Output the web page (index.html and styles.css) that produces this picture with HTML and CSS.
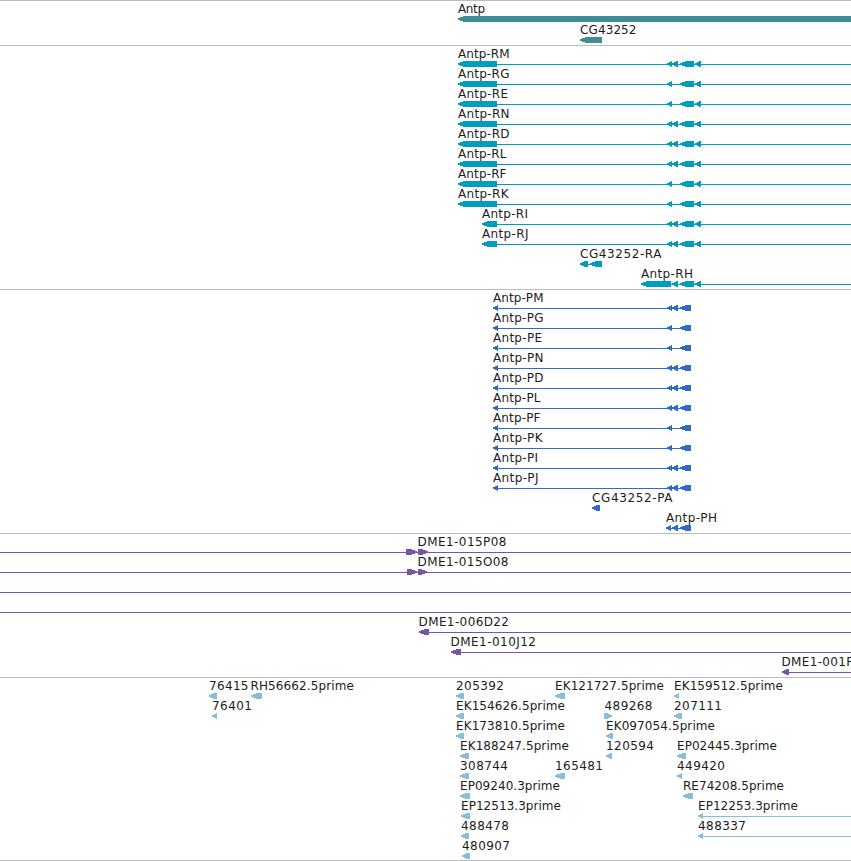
FILE: index.html
```
<!DOCTYPE html>
<html lang="en">
<head>
<meta charset="utf-8">
<title>Antp region</title>
<link rel="stylesheet" href="styles.css">
</head>
<body>
<main class="browser" id="browser"></main>
<script src="tracks.js"></script>
</body>
</html>
```
FILE: styles.css
```
body {
  margin: 0;
  background: #fff;
  overflow: hidden;
}

.browser {
  display: flex;
  flex-direction: column;
  width: 851px;
  height: 861px;
  overflow: hidden;
}

.track {
  flex: none;
  padding: 1px 0 2px;
  border-top: 1px solid #bebebe;
}

.track:last-child {
  padding-bottom: 1px;
  border-bottom: 1px solid #bebebe;
}

.row {
  display: block;
  width: 851px;
  height: 20px;
  overflow: visible;
}

.genes .row { height: 21px; }
.genes { padding-bottom: 1px; color: #408e93; }
.transcripts { color: #009dbe; }
.proteins { color: #306bcc; }
.clones { color: #7557a8; }
.insertions { color: #89bddd; }

.shape {
  fill: currentColor;
  shape-rendering: crispEdges;
}

.label {
  fill: #1c1c1c;
  font: 12px "DejaVu Sans", sans-serif;
}
```
FILE: tracks.js
```
// Feature: [start, end, direction]; line: [start, end]; label: [text, start, end]
const END = 851;

function row(labels, features, line) {
  return { labels, features, line };
}

function transcript(letter, start, second) {
  const f = [[start, 497], [667, 672], [680, 694], [695, 701]];
  if (second) f.push([672, 678]);
  const ends = { M: 509.5, G: 509.5, E: 508, N: 509.5, D: 509.5, L: 506.5, F: 506.5, K: 508.5, I: 528, J: 528.5 };
  return row([["Antp-R" + letter, start, ends[letter]]], f, [start + 3, END]);
}

function protein(letter, second) {
  const f = [[493, 498], [667, 672], [680, 691]];
  if (second) f.push([672, 678]);
  const ends = { M: 543.5, G: 543.5, E: 542, N: 543.5, D: 543.5, L: 540.5, F: 540.5, K: 542.5, I: 538, J: 538.5 };
  return row([["Antp-P" + letter, 493, ends[letter]]], f, [496, 691]);
}

const variants = [["M", 1], ["G", 0], ["E", 0], ["N", 1], ["D", 1], ["L", 1], ["F", 0], ["K", 0], ["I", 1], ["J", 1]];

const tracks = [
  ["genes", [
    row([["Antp", 458, 485]], [[458, END]]),
    row([["CG43252", 580, 636.5]], [[580, 602]])
  ]],
  ["transcripts", [
    ...variants.map(([l, s]) => transcript(l, l === "I" || l === "J" ? 482 : 458, s)),
    row([["CG43252-RA", 580, 661.5]], [[580, 588], [590, 602]], [583, 600]),
    row([["Antp-RH", 641, 693]], [[641, 671], [672, 678], [680, 694], [695, 701]], [650, END])
  ]],
  ["proteins", [
    ...variants.map(([l, s]) => protein(l, s)),
    row([["CG43252-PA", 592, 672.5]], [[592, 600]]),
    row([["Antp-PH", 666, 717]], [[666, 671], [672, 678], [680, 691]], [668, 690])
  ]],
  ["clones", [
    row([["DME1-015P08", 417.5, 506.5]], [[406, 417, 1], [418, 428, 1]], [0, END]),
    row([["DME1-015O08", 417.5, 508.5]], [[407, 417, 1], [418, 427, 1]], [0, END]),
    row([], [], [0, END]),
    row([], [], [0, END]),
    row([["DME1-006D22", 418.5, 509]], [[419, 429]], [422, END]),
    row([["DME1-010J12", 450.5, 536]], [[451, 461]], [454, END]),
    row([["DME1-001P", 781.5, 853.5]], [[782, 789]], [785, END])
  ]],
  ["insertions", [
    row([["76415", 209, 248.5], ["RH56662.5prime", 250.5, 354], ["205392", 456, 504], ["EK121727.5prime", 555, 664], ["EK159512.5prime", 674, 783]],
      [[209, 217], [251, 262], [456, 464], [555, 565], [674, 679]]),
    row([["76401", 212, 252], ["EK154626.5prime", 456, 565], ["489268", 604.5, 652.5], ["207111", 674, 722]],
      [[212, 217], [456, 464], [604, 612, 1], [674, 682]]),
    row([["EK173810.5prime", 456, 565], ["EK097054.5prime", 606, 715]], [[456, 464], [606, 613]]),
    row([["EK188247.5prime", 460, 569], ["120594", 606, 654], ["EP02445.3prime", 677, 777]],
      [[460, 469], [606, 612], [677, 686]]),
    row([["308744", 460, 508], ["165481", 555, 603], ["449420", 677, 725]], [[460, 469], [555, 565], [677, 682]]),
    row([["EP09240.3prime", 460, 560], ["RE74208.5prime", 683, 784]], [[460, 470], [683, 693]]),
    row([["EP12513.3prime", 461, 561], ["EP12253.3prime", 698, 798]], [[461, 470], [698, 703]], [701, END]),
    row([["488478", 461, 509], ["488337", 698, 746]], [[461, 469], [698, 703]], [701, END]),
    row([["480907", 462, 510]], [[462, 470]])
  ]]
];

// Six pixels tall; the head narrows to two pixels at the tip.
function arrow([a, b, right]) {
  const h = Math.min(b - a > 8 ? 6 : 5, b - a);
  const pts = right
    ? [[a, 14], [b - h, 14], [b, 16.3], [b, 17.6], [b - h, 20], [a, 20]]
    : [[b, 14], [a + h, 14], [a, 16.3], [a, 17.6], [a + h, 20], [b, 20]];
  return `<polygon class="shape" points="${pts.map(p => p.join(",")).join(" ")}"/>`;
}

function drawRow(r) {
  let out = "";
  if (r.line) out += `<rect class="shape" x="${r.line[0]}" y="17" width="${r.line[1] - r.line[0]}" height="1"/>`;
  out += r.features.map(arrow).join("");
  out += r.labels.map(([t, a, b]) => `<text class="label" x="${a}" y="11" textLength="${b - a}">${t}</text>`).join("");
  return `<svg class="row">${out}</svg>`;
}

document.getElementById("browser").innerHTML = tracks
  .map(([name, rows]) => `<section class="track ${name}">${rows.map(drawRow).join("")}</section>`)
  .join("");
```
